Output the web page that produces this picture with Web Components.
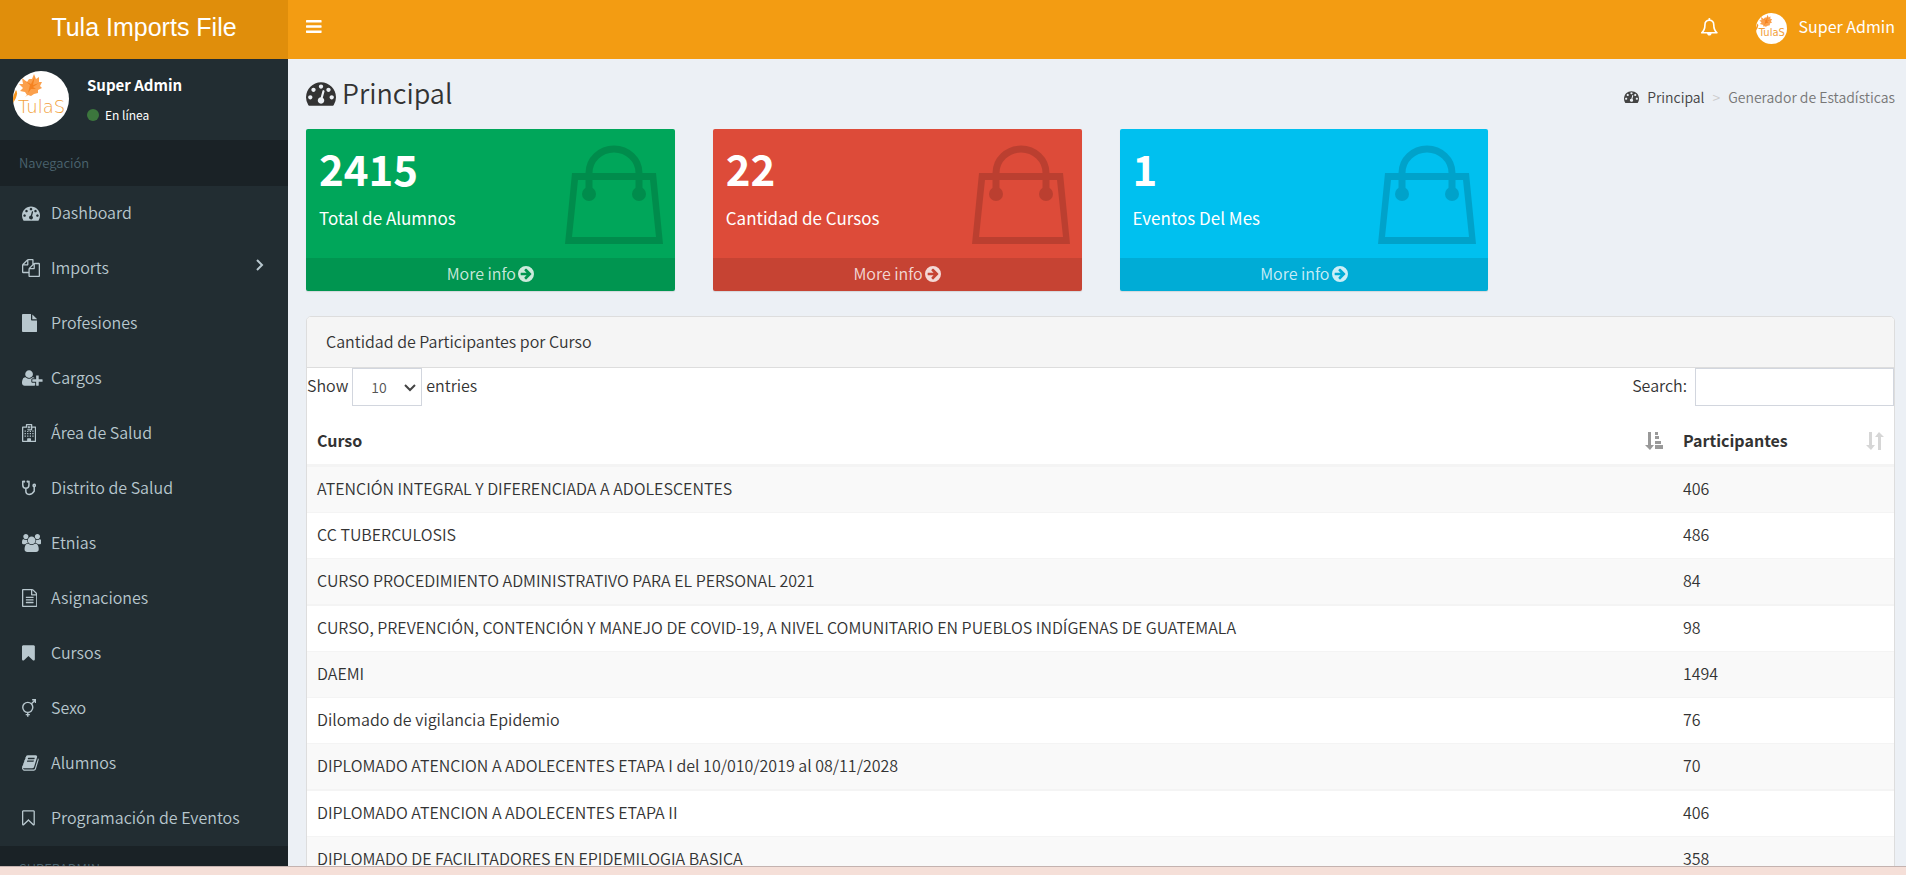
<!DOCTYPE html>
<html lang="es">
<head>
<meta charset="utf-8">
<title>Tula Imports File</title>
<style>
  html, body { margin: 0; height: 100%; }
  body { font-family: "Noto Sans CJK JP", "Noto Sans", sans-serif; font-size: 16px; font-weight: 350; line-height: 25px; color: #333; background: #ecf0f5; }
</style>
</head>
<body>
<app-shell>
  <top-bar slot="top" brand="Tula Imports File" user="Super Admin"></top-bar>
  <side-bar slot="side">
    <user-panel slot="user" name="Super Admin" status="En línea"></user-panel>
    <nav-header>Navegación</nav-header>
    <nav-item icon="tachometer">Dashboard</nav-item>
    <nav-item icon="files" expandable>Imports</nav-item>
    <nav-item icon="file">Profesiones</nav-item>
    <nav-item icon="userplus">Cargos</nav-item>
    <nav-item icon="hospital">Área de Salud</nav-item>
    <nav-item icon="stethoscope">Distrito de Salud</nav-item>
    <nav-item icon="users">Etnias</nav-item>
    <nav-item icon="filetext">Asignaciones</nav-item>
    <nav-item icon="bookmark">Cursos</nav-item>
    <nav-item icon="transgender">Sexo</nav-item>
    <nav-item icon="book">Alumnos</nav-item>
    <nav-item icon="bookmarko">Programación de Eventos</nav-item>
    <nav-header>SUPERADMIN</nav-header>
  </side-bar>
  <page-header heading="Principal" section="Generador de Estadísticas"></page-header>
  <card-row>
    <stat-card value="2415" label="Total de Alumnos" tone="green"></stat-card>
    <stat-card value="22" label="Cantidad de Cursos" tone="red"></stat-card>
    <stat-card value="1" label="Eventos Del Mes" tone="aqua"></stat-card>
  </card-row>
  <course-panel heading="Cantidad de Participantes por Curso"></course-panel>
</app-shell>

<script>
const bookmarkOuter = 'M1292 0q23 0 44 9 33 13 52 41t20 62v1289q0 34-20 62t-52 41q-19 8-44 8-48 0-83-32l-441-424-441 424q-36 33-83 33-23 0-44-9-33-13-52-41t-20-62v-1289q0-34 20-62t52-41q21-9 44-9z';

/* Each icon: [viewBox width, viewBox height, markup] */
const ICONS = {
  bars: [1536, 1280, '<path d="M1536 1088v128q0 26-19 45t-45 19h-1408q-26 0-45-19t-19-45v-128q0-26 19-45t45-19h1408q26 0 45 19t19 45zm0-512v128q0 26-19 45t-45 19h-1408q-26 0-45-19t-19-45v-128q0-26 19-45t45-19h1408q26 0 45 19t19 45zm0-512v128q0 26-19 45t-45 19h-1408q-26 0-45-19t-19-45v-128q0-26 19-45t45-19h1408q26 0 45 19t19 45z"/>'],
  tachometer: [1792, 1792, '<path d="M384 1152q0-53-37.5-90.5t-90.5-37.5-90.5 37.5-37.5 90.5 37.5 90.5 90.5 37.5 90.5-37.5 37.5-90.5zm192-448q0-53-37.5-90.5t-90.5-37.5-90.5 37.5-37.5 90.5 37.5 90.5 90.5 37.5 90.5-37.5 37.5-90.5zm428 481l101-382q6-26-7.5-48.5t-38.5-29.5-48 6.5-30 39.5l-101 382q-60 5-107 43.5t-63 98.5q-20 77 20 146t117 89 146-20 89-117q16-60-6-117t-72-91zm660-33q0-53-37.5-90.5t-90.5-37.5-90.5 37.5-37.5 90.5 37.5 90.5 90.5 37.5 90.5-37.5 37.5-90.5zm-640-640q0-53-37.5-90.5t-90.5-37.5-90.5 37.5-37.5 90.5 37.5 90.5 90.5 37.5 90.5-37.5 37.5-90.5zm448 192q0-53-37.5-90.5t-90.5-37.5-90.5 37.5-37.5 90.5 37.5 90.5 90.5 37.5 90.5-37.5 37.5-90.5zm320 448q0 261-141 483-19 29-54 29h-1402q-35 0-54-29-141-221-141-483 0-182 71-348t191-286 286-191 348-71 348 71 286 191 191 286 71 348z"/>'],
  files: [1792, 1792, '<path d="M1696 384q40 0 68 28t28 68v1216q0 40-28 68t-68 28h-960q-40 0-68-28t-28-68v-288h-544q-40 0-68-28t-28-68v-672q0-40 20-88t48-76l408-408q28-28 76-48t88-20h416q40 0 68 28t28 68v328q68-40 128-40h416zm-544 213l-299 299h299v-299zm-640-384l-299 299h299v-299zm196 647l316-316v-416h-384v416q0 40-28 68t-68 28h-416v640h512v-256q0-40 20-88t48-76zm956 804v-1152h-384v416q0 40-28 68t-68 28h-416v640h896z"/>'],
  file: [1536, 1792, '<path d="M1024 512v-472q22 14 36 28l408 408q14 14 28 36h-472zm-128 32q0 40 28 68t68 28h544v1056q0 40-28 68t-68 28h-1344q-40 0-68-28t-28-68v-1600q0-40 28-68t68-28h800v544z"/>'],
  userplus: [2048, 1792, '<path d="M704 896q-159 0-271.5-112.5t-112.5-271.5 112.5-271.5 271.5-112.5 271.5 112.5 112.5 271.5-112.5 271.5-271.5 112.5zm960 128h352q13 0 22.5 9.5t9.5 22.5v192q0 13-9.5 22.5t-22.5 9.5h-352v352q0 13-9.5 22.5t-22.5 9.5h-192q-13 0-22.5-9.5t-9.5-22.5v-352h-352q-13 0-22.5-9.5t-9.5-22.5v-192q0-13 9.5-22.5t22.5-9.5h352v-352q0-13 9.5-22.5t22.5-9.5h192q13 0 22.5 9.5t9.5 22.5v352zm-736 224q0 52 38 90t90 38h256v238q-68 50-171 50h-874q-121 0-194-69t-73-190q0-53 3.5-103.5t14-109 26.5-108.5 43-97.5 62-81 85.5-53.5 111.5-20q19 0 39 17 79 61 154.5 91.5t164.5 30.5 164.5-30.5 154.5-91.5q20-17 39-17 132 0 217 96h-223q-52 0-90 38t-38 90v192z"/>'],
  hospital: [1408, 1792, '<path fill-rule="evenodd" d="M64 256h320v-192q0-64 64-64h512q64 0 64 64v192h320q64 0 64 64v1408q0 64-64 64h-1280q-64 0-64-64v-1408q0-64 64-64zm64 128v1280h384v-192q0-64 64-64h256q64 0 64 64v192h384v-1280h-256v128q-20 128-128 128h-256q-108 0-128-128v-128zM512 128h384v384h-384z"/><path d="M576 192h86v86h84v-86h86v256h-86v-86h-84v86h-86zM256 640h128v128h-128zM512 704h128v96h-128zM768 704h128v96h-128zM1024 640h128v128h-128zM256 896h128v128h-128zM512 896h128v128h-128zM768 896h128v128h-128zM1024 896h128v128h-128zM256 1152h128v128h-128zM512 1152h128v128h-128zM768 1152h128v128h-128zM1024 1152h128v128h-128z"/>'],
  stethoscope: [1408, 1792, '<g fill="none" stroke="currentColor" stroke-width="150"><path d="M220 260H76v340q0 324 308 324t308-324V260H548M384 924v280q0 330 320 330t512-330V760"/><circle cx="1216" cy="640" r="110"/></g><circle cx="220" cy="260" r="105"/><circle cx="548" cy="260" r="105"/>'],
  users: [1920, 1792, '<path d="M593 896q-162 5-265 128h-134q-82 0-138-40.5t-56-118.5q0-353 124-353 6 0 43.5 21t97.5 42.5 119 21.5q67 0 133-23-5 37-5 66 0 139 81 256zm1071 637q0 120-73 189.5t-194 69.5h-874q-121 0-194-69.5t-73-189.5q0-53 3.5-103.5t14-109 26.5-108.5 43-97.5 62-81 85.5-53.5 111.5-20q10 0 43 21.5t73 48 107 48 135 21.5 135-21.5 107-48 73-48 43-21.5q61 0 111.5 20t85.5 53.5 62 81 43 97.5 26.5 108.5 14 109 3.5 103.5zm-1024-1277q0 106-75 181t-181 75-181-75-75-181 75-181 181-75 181 75 75 181zm704 384q0 159-112.5 271.5t-271.5 112.5-271.5-112.5-112.5-271.5 112.5-271.5 271.5-112.5 271.5 112.5 112.5 271.5zm576 225q0 78-56 118.5t-138 40.5h-134q-103-123-265-128 81-117 81-256 0-29-5-66 66 23 133 23 59 0 119-21.5t97.5-42.5 43.5-21q124 0 124 353zm-128-609q0 106-75 181t-181 75-181-75-75-181 75-181 181-75 181 75 75 181z"/>'],
  filetext: [1536, 1792, '<path transform="translate(-128)" d="M1596 380q28 28 48 76t20 88v1152q0 40-28 68t-68 28h-1344q-40 0-68-28t-28-68v-1600q0-40 28-68t68-28h896q40 0 88 20t76 48zm-444-244v376h376q-10-29-22-41l-313-313q-12-12-41-22zm384 1528v-1024h-416q-40 0-68-28t-28-68v-416h-768v1536h1280zm-1024-864q0-14 9-23t23-9h704q14 0 23 9t9 23v64q0 14-9 23t-23 9h-704q-14 0-23-9t-9-23v-64zm736 224q14 0 23 9t9 23v64q0 14-9 23t-23 9h-704q-14 0-23-9t-9-23v-64q0-14 9-23t23-9h704zm0 256q14 0 23 9t9 23v64q0 14-9 23t-23 9h-704q-14 0-23-9t-9-23v-64q0-14 9-23t23-9h704z"/>'],
  bookmark: [1280, 1792, '<path transform="translate(-128 128)" d="' + bookmarkOuter + '"/>'],
  bookmarko: [1280, 1792, '<path transform="translate(-128 128)" fill-rule="evenodd" d="' + bookmarkOuter + 'M1280 128h-1024v1242l423-406 89-85 89 85 423 406z"/>'],
  transgender: [1408, 1792, '<g fill="none" stroke="currentColor" stroke-width="140"><circle cx="576" cy="832" r="500"/><path d="M940 470L1330 90M1010 72h326v326M576 1340v420M370 1560h412"/></g>'],
  book: [1664, 1792, '<path transform="translate(-64)" d="M1703 478q40 57 18 129l-275 906q-19 64-76.5 107.5t-122.5 43.5h-923q-77 0-148.5-53.5t-99.5-131.5q-24-67-2-127 0-4 3-27t4-37q1-8-3-21.5t-3-19.5q2-11 8-21t16.5-23.5 16.5-23.5q23-38 45-91.5t30-91.5q3-10 .5-30t-.5-28q3-11 17-28t17-23q21-36 42-92t25-90q1-9-2.5-32t.5-28q4-13 22-30.5t22-22.5q19-26 42.5-84.5t27.5-96.5q1-8-3-25.5t-2-26.5q2-8 9-18t18-23 17-21q8-12 16.5-30.5t15-35 16-36 19.5-32 26.5-23.5 36-11.5 47.5 5.5l-1 3q38-9 51-9h761q74 0 114 56t18 130l-274 906q-36 119-71.5 153.5t-128.5 34.5h-869q-27 0-38 15-11 16-1 43 24 70 144 70h923q29 0 56-15.5t35-41.5l300-987q7-22 5-57 38 15 59 43zm-1064 2q-4 13 2 22.5t20 9.5h608q13 0 25.5-9.5t16.5-22.5l21-64q4-13-2-22.5t-20-9.5h-608q-13 0-25.5 9.5t-16.5 22.5zm-83 256q-4 13 2 22.5t20 9.5h608q13 0 25.5-9.5t16.5-22.5l21-64q4-13-2-22.5t-20-9.5h-608q-13 0-25.5 9.5t-16.5 22.5z"/>'],
  arrow: [1536, 1536, '<path transform="translate(-128 -128)" fill-rule="evenodd" d="M1664 896a768 768 0 1 1-1536 0 768 768 0 0 1 1536 0zM1413 896q0-27-18-45l-453-453q-18-18-45-18t-45 18l-91 91q-18 18-18 45t18 45l189 189h-502q-26 0-45 19t-19 45v128q0 26 19 45t45 19h502l-189 189q-19 19-19 45t19 45l91 91q18 18 45 18t45-18l453-453q18-18 18-45z"/>'],
  bell: [1664, 1792, '<path fill="none" stroke="currentColor" stroke-width="160" stroke-linejoin="round" d="M832 230c-290 0-440 220-440 470 0 380-70 560-320 770h1520c-250-210-320-390-320-770 0-250-150-470-440-470z"/><path d="M740 60q0-60 92-60t92 60v180h-184zM600 1470h464q-10 280-232 280t-232-280z"/>'],
  chevron: [10, 14, '<path fill="none" stroke="currentColor" stroke-width="2" d="M2 2l5 5-5 5"/>'],
  down: [12, 8, '<path fill="none" stroke="#444" stroke-width="2" d="M1 1l5 5 5-5"/>'],
  sortasc: [18, 18, '<path d="M3 0h3v13h3l-4 5-5-5h3zM10 0h3v3h-3zM10 4h4v3h-4zM10 9h6v3h-6zM10 13h8v4h-8z"/>'],
  sort: [18, 18, '<path d="M3 0h3v13h3l-4 5-5-5h3zM12 18V5H9l4-5 5 5h-3v13z"/>'],
  bag: [98, 99, '<path fill-rule="evenodd" d="M7 28h84l7 71H0zM13 35L7 92h84L85 35z"/><path fill="none" stroke="currentColor" stroke-width="7" d="M24 49V28a25 24 0 0 1 50 0V49"/><circle cx="24" cy="49" r="7"/><circle cx="74" cy="49" r="7"/>']
};

const COURSES = [
  ['ATENCIÓN INTEGRAL Y DIFERENCIADA A ADOLESCENTES', 406],
  ['CC TUBERCULOSIS', 486],
  ['CURSO PROCEDIMIENTO ADMINISTRATIVO PARA EL PERSONAL 2021', 84],
  ['CURSO, PREVENCIÓN, CONTENCIÓN Y MANEJO DE COVID-19, A NIVEL COMUNITARIO EN PUEBLOS INDÍGENAS DE GUATEMALA', 98],
  ['DAEMI', 1494],
  ['Dilomado de vigilancia Epidemio', 76],
  ['DIPLOMADO ATENCION A ADOLECENTES ETAPA I del 10/010/2019 al 08/11/2028', 70],
  ['DIPLOMADO ATENCION A ADOLECENTES ETAPA II', 406],
  ['DIPLOMADO DE FACILITADORES EN EPIDEMILOGIA BASICA', 358]
];

/* Base class: renders the subclass's view() into an open shadow root. */
class View extends HTMLElement {
  connectedCallback() {
    if (this.shadowRoot) return;
    this.attachShadow({ mode: 'open' }).innerHTML = this.view((n) => this.getAttribute(n) || '');
  }
}
const define = (name, view) => customElements.define(name, class extends View { view(a) { return view(a, this); } });

/* Icon: size sets the height, the width follows the glyph. */
define('ui-icon', (a) => {
  const [w, h, body] = ICONS[a('name')];
  return `<style>
    :host { display: inline-flex; flex: none; }
    svg { display: block; height: ${a('size')}px; fill: currentColor; }
  </style><svg viewBox="0 0 ${w} ${h}" aria-hidden="true">${body}</svg>`;
});

define('user-avatar', () => `<style>
    :host { display: block; flex: none; width: 56px; height: 56px; border-radius: 50%; overflow: hidden; background: #fff; }
    svg { display: block; width: 100%; height: 100%; }
  </style>
  <svg viewBox="0 0 56 56" role="img" aria-label="TulaS">
    <path fill="#fba04c" d="M14 24l-2-3-5-1 3-3-4-4 4 0-1-6 5 4 2-3 3 0 2-5 2 5 3-2 0 5 3 0-2 4 2 2-4 2 0 3-4 1-3 2-3-1-3 2z"/>
    <path fill="#f58220" d="M15 22l2-8-5-4 6 3 4-8-2 9 6-2-6 4 3 2-5 0z"/>
    <path fill="#f7941d" d="M-1 28l4-9q3 4-3 13z"/>
    <text x="5" y="42" font-family="DejaVu Sans" font-size="18" fill="#f2a03a">TulaS</text>
  </svg>`);

define('app-shell', () => `<style>
    :host { display: grid; grid-template: "top top" auto "side main" minmax(0, 1fr) "foot foot" auto / 288px minmax(0, 1fr); height: 100vh; overflow: hidden; }
    slot[name=top]::slotted(*) { grid-area: top; }
    slot[name=side]::slotted(*) { grid-area: side; }
    main { grid-area: main; overflow: hidden; padding: 16px 11px 0 18px; background: #ecf0f5; }
    footer { grid-area: foot; height: 8px; border-top: 1px solid #c4b3b0; background: #f5dfd8; }
  </style>
  <slot name="top"></slot><slot name="side"></slot><main><slot></slot></main><footer></footer>`);

define('top-bar', (a) => `<style>
    :host { display: flex; height: 59px; background: #f39c12; color: #fff; font-weight: 400; }
    a { color: inherit; text-decoration: none; }
    .brand { width: 288px; background: #e08e0b; font: 25px/55px "Liberation Sans", Arial, sans-serif; text-align: center; }
    nav { flex: 1; display: flex; align-items: center; padding: 0 11px 6px 18px; }
    button { display: flex; border: 0; padding: 0; background: none; color: inherit; }
    .bell { margin-left: auto; margin-right: 38px; }
    .user { display: flex; align-items: center; gap: 12px; line-height: 31px; }
    user-avatar { width: 31px; height: 31px; }
    .pic { padding-top: 4px; }
  </style>
  <a class="brand" href="#">${a('brand')}</a>
  <nav>
    <button aria-label="Menú"><ui-icon name="bars" size="13"></ui-icon></button>
    <button class="bell" aria-label="Notificaciones"><ui-icon name="bell" size="18"></ui-icon></button>
    <a class="user" href="#"><span class="pic"><user-avatar></user-avatar></span><span>${a('user')}</span></a>
  </nav>`);

define('side-bar', () => `<style>
    :host { display: block; overflow: hidden; background: #222d32; color: #b8c7ce; }
  </style><slot name="user"></slot><slot></slot>`);

define('user-panel', (a) => `<style>
    :host { display: flex; gap: 18px; padding: 12px 13px 13px; color: #fff; }
    .name { margin: 0; line-height: 28px; font-weight: 700; font-size: 15px; }
    a { display: flex; align-items: center; gap: 6px; margin-top: 6px; line-height: 20px; font-size: 12px; font-weight: 400; color: inherit; text-decoration: none; }
    i { width: 12px; height: 12px; border-radius: 50%; background: #3c763d; }
    div { height: 56px; }
  </style>
  <user-avatar></user-avatar>
  <div><p class="name">${a('name')}</p><a href="#"><i></i>${a('status')}</a></div>`);

define('nav-header', () => `<style>
    :host { display: block; padding: 0 19px; line-height: 46px; font-size: 13px; color: #4b646f; background: #1a2226; }
  </style><slot></slot>`);

define('nav-item', (a, el) => `<style>
    :host { display: block; }
    a { box-sizing: border-box; display: flex; align-items: center; height: 55px; padding: 0 23px 2px 22px; color: inherit; text-decoration: none; }
    .icon { width: 29px; display: flex; }
    .more { margin-left: auto; padding-bottom: 6px; display: flex; }
  </style>
  <a href="#"><span class="icon"><ui-icon name="${a('icon')}" size="18"></ui-icon></span><slot></slot>
  ${el.hasAttribute('expandable') ? '<span class="more"><ui-icon name="chevron" size="14"></ui-icon></span>' : ''}</a>`);

define('page-header', (a) => `<style>
    :host { display: flex; align-items: center; justify-content: space-between; height: 36px; margin-bottom: 18px; }
    h1 { display: flex; align-items: center; gap: 6px; margin: 0; font-size: 27px; line-height: 36px; font-weight: inherit; }
    ol { display: flex; margin: 0; padding: 7px 0 0; list-style: none; font-size: 14px; line-height: 20px; color: #777; }
    a { display: flex; align-items: center; gap: 8px; color: #444; text-decoration: none; }
    li + li::before { content: ">"; padding: 0 8px; color: #ccc; }
  </style>
  <h1><ui-icon name="tachometer" size="30"></ui-icon>${a('heading')}</h1>
  <ol><li><a href="#"><ui-icon name="tachometer" size="15"></ui-icon>${a('heading')}</a></li><li>${a('section')}</li></ol>`);

define('card-row', () => `<style>
    :host { display: grid; grid-template-columns: repeat(4, minmax(0, 1fr)); gap: 38px; margin-bottom: 25px; }
  </style><slot></slot>`);

define('stat-card', (a) => `<style>
    :host { display: block; border-radius: 2px; overflow: hidden; color: #fff; box-shadow: 0 1px 1px rgba(0,0,0,.1);
      background: ${{ green: '#00a65a', red: '#dd4b39', aqua: '#00c0ef' }[a('tone')]}; }
    .body { display: flex; justify-content: space-between; height: 129px; padding: 0 12px 0 13px; }
    h3 { margin: 12px 0 10px; font-size: 42px; line-height: 54px; font-weight: 700; }
    p { margin: 0; font-size: 17px; line-height: 26px; font-weight: 400; }
    .bag { padding-top: 16px; color: #000; opacity: .15; }
    a { box-sizing: border-box; display: flex; align-items: center; justify-content: center; gap: 2px; height: 33px; padding-bottom: 2px; background: rgba(0,0,0,.1); color: rgba(255,255,255,.8); text-decoration: none; }
  </style>
  <div class="body"><div><h3>${a('value')}</h3><p>${a('label')}</p></div><span class="bag"><ui-icon name="bag" size="99"></ui-icon></span></div>
  <a href="#">More info<ui-icon name="arrow" size="16"></ui-icon></a>`);

define('course-panel', (a) => `<style>
    :host { display: block; border: 1px solid #ddd; border-radius: 5px; background: #fff; overflow: hidden; }
    h2 { margin: 0; padding: 0 19px 2px; font-size: 16px; line-height: 48px; font-weight: inherit; background: #f5f5f5; border-bottom: 1px solid #ddd; }
    .tools { display: flex; justify-content: space-between; height: 49px; line-height: 34px; }
    .tools > div { display: flex; align-items: flex-start; }
    .pick { position: relative; margin: 0 4px; }
    select, input { box-sizing: border-box; display: block; height: 38px; border: 1px solid #d2d6de; border-radius: 0; margin: 0; background: #fff; color: #555; font: 350 14px "Noto Sans CJK JP", sans-serif; }
    select { width: 70px; padding: 0 18px; appearance: none; }
    .pick ui-icon { position: absolute; right: 6px; top: 16px; pointer-events: none; }
    input { width: 199px; padding: 0 12px; margin-left: 8px; }
    table { width: 100%; border-collapse: separate; border-spacing: 0; table-layout: fixed; }
    th { padding: 0 10px; height: 47px; text-align: left; font-weight: 700; border-bottom: 3px solid #f4f4f4; }
    th:last-child { width: 201px; }
    th div { display: flex; justify-content: space-between; align-items: center; }
    th ui-icon { color: #999; }
    th:last-child ui-icon { color: #d6d6d6; }
    td { padding: 9px 10px 11px; line-height: 25px; border-top: 1px solid #f4f4f4; }
    tbody tr:first-child td { border-top: 0; }
    tbody tr:nth-child(4n) td { border-top-width: 2px; }
    tbody tr:nth-child(odd) { background: #f9f9f9; }
  </style>
  <h2>${a('heading')}</h2>
  <div class="tools">
    <div><label for="len">Show</label><span class="pick"><select id="len"><option>10</option><option>25</option></select><ui-icon name="down" size="8"></ui-icon></span><span>entries</span></div>
    <div><label for="find">Search:</label><input id="find" type="search"></div>
  </div>
  <table>
    <thead><tr><th><div>Curso<ui-icon name="sortasc" size="18"></ui-icon></div></th><th><div>Participantes<ui-icon name="sort" size="18"></ui-icon></div></th></tr></thead>
    <tbody>${COURSES.map(([c, n]) => `<tr><td>${c}</td><td>${n}</td></tr>`).join('')}</tbody>
  </table>`);
</script>
</body>
</html>
